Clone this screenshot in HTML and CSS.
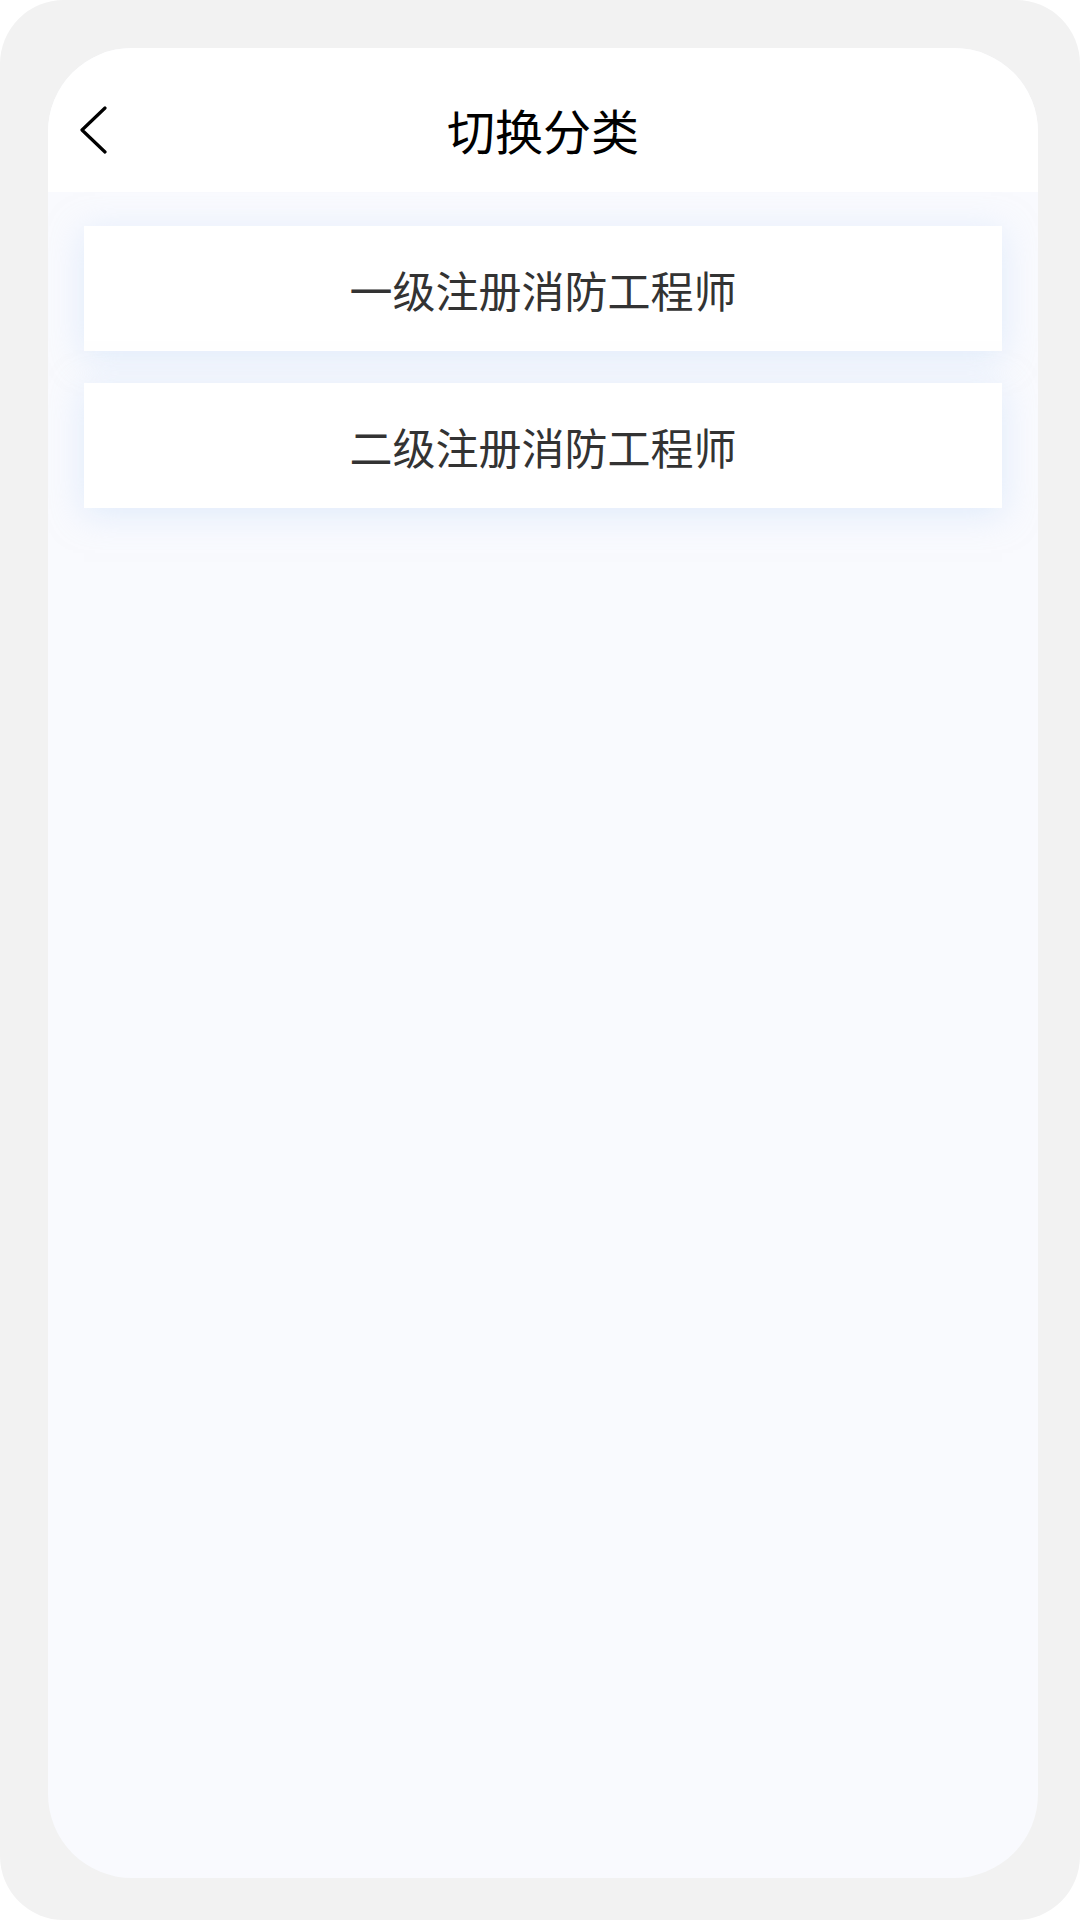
FILE: index.html
```html
<!DOCTYPE html>
<html lang="zh-CN">

<head>
    <meta charset="UTF-8">
    <meta name="viewport" content="width=device-width, initial-scale=1.0">
    <title>切换分类</title>
    <link rel="stylesheet" href="styles.css">
</head>

<body>
    <div class="frame">
        <div class="phone">
            <div class="header">
                <span class="back">
                    <svg width="30" height="50" viewBox="0 0 30 50">
                        <path d="M26 2 L3 24 L26 46" fill="none" stroke="#000" stroke-width="3.2" stroke-linecap="round" stroke-linejoin="round" />
                    </svg>
                </span>
                <h1 class="title">切换分类</h1>
            </div>
            <div class="list">
                <div class="item">一级注册消防工程师</div>
                <div class="item">二级注册消防工程师</div>
            </div>
        </div>
    </div>
</body>

</html>
```

FILE: styles.css
```css
* {
    margin: 0;
    padding: 0;
    box-sizing: border-box;
}

body {
    background: #fff;
    font-family: "Noto Sans CJK SC", "Noto Sans", sans-serif;
}

.frame {
    width: 1080px;
    height: 1920px;
    background: #f2f2f2;
    border-radius: 64px;
    padding: 48px 42px 42px 48px;
}

.phone {
    height: 100%;
    background: #f9fafe;
    border-radius: 84px;
    overflow: hidden;
}

.header {
    position: relative;
    height: 144px;
    background: #fff;
    display: flex;
    align-items: center;
    justify-content: center;
    padding-top: 18px;
}

.back {
    position: absolute;
    left: 31px;
    top: 58px;
    display: flex;
}

.title {
    font-size: 48px;
    font-weight: 400;
    color: #000;
    line-height: 1;
}

.list {
    padding: 34px 36px;
    display: flex;
    flex-direction: column;
    gap: 32px;
}

.item {
    height: 125px;
    background: #fff;
    display: flex;
    align-items: center;
    justify-content: center;
    font-size: 43px;
    color: #333;
    box-shadow: 0 6px 32px rgba(200, 222, 250, 0.5);
}
```
